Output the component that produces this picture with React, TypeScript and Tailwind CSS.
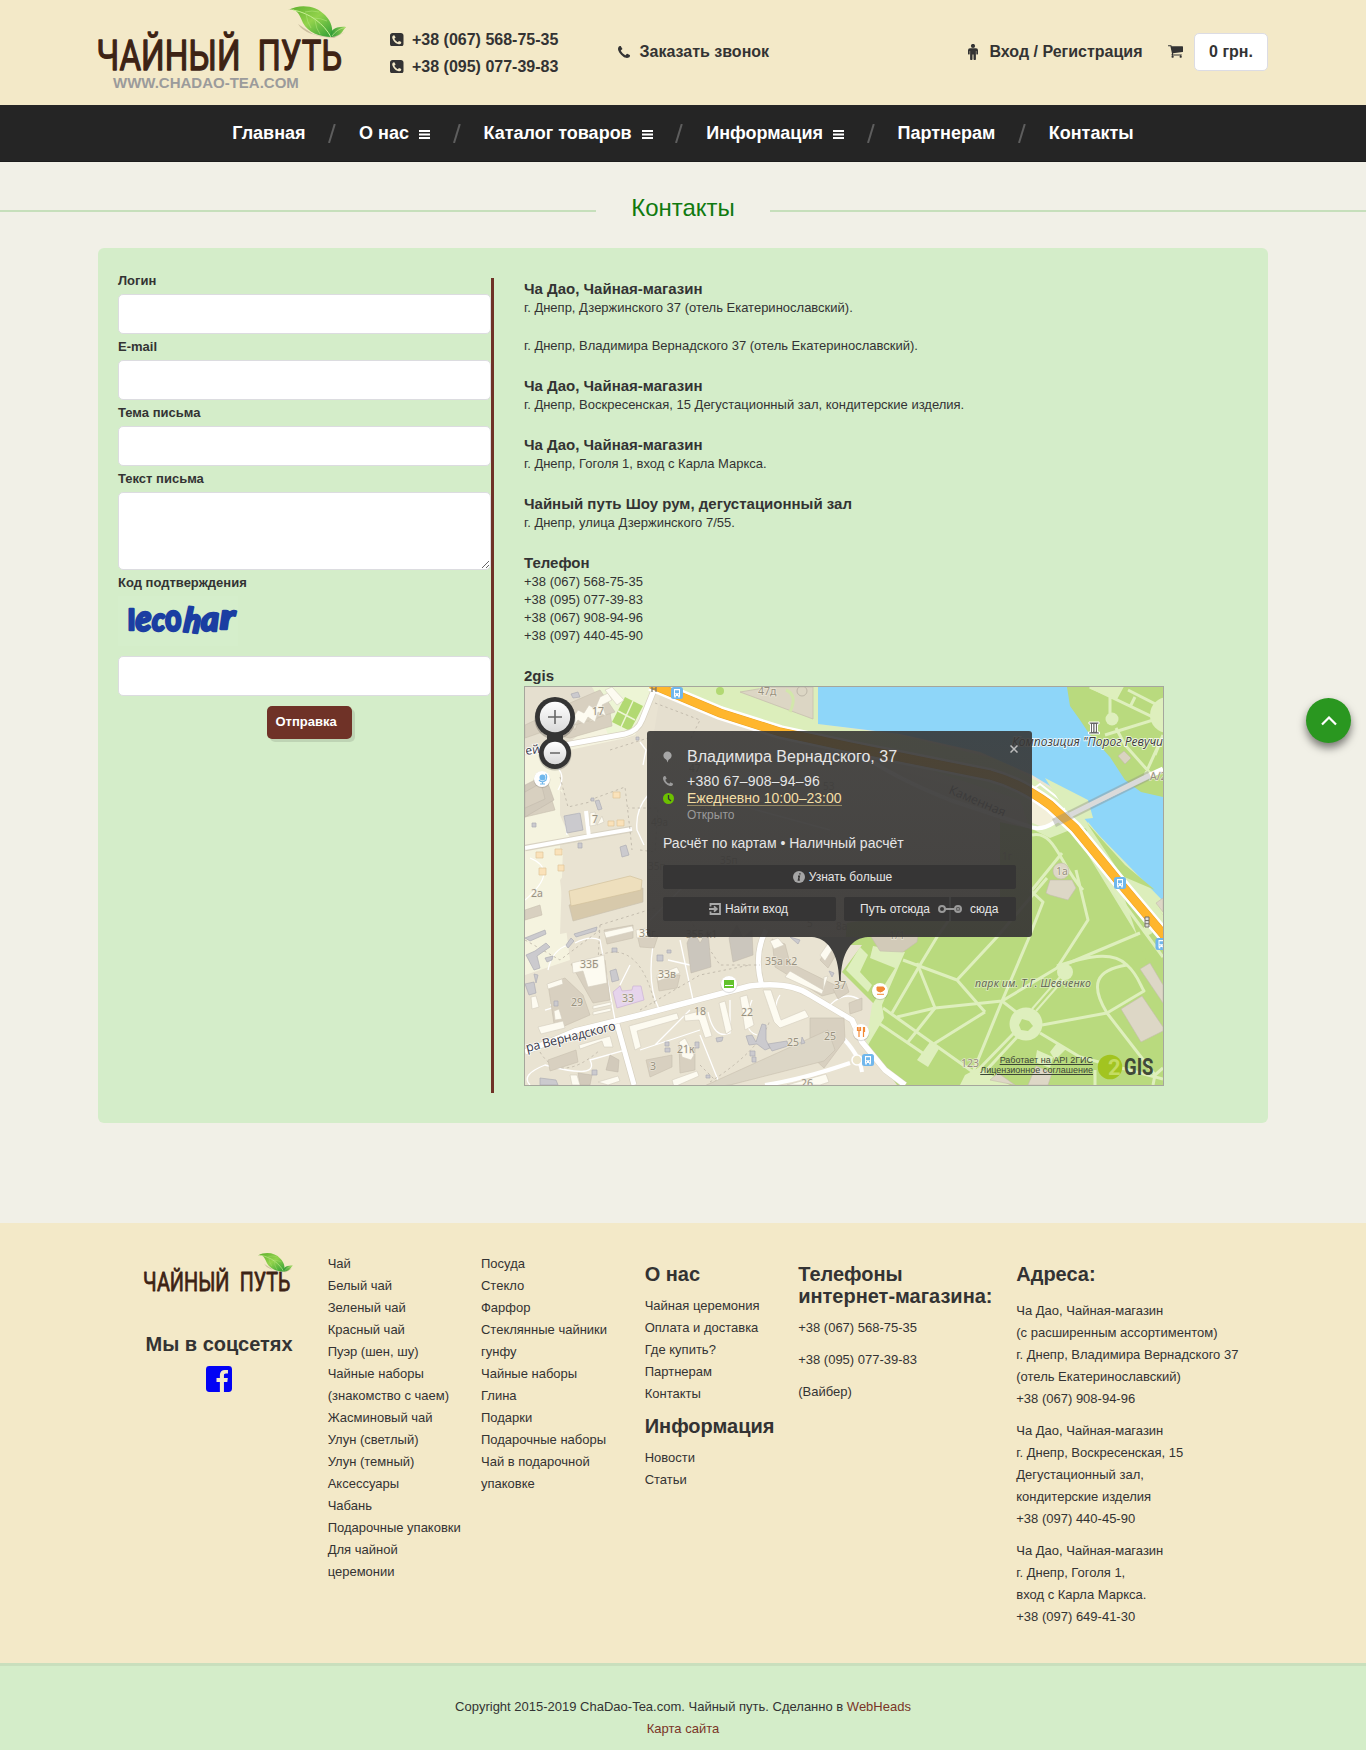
import React from "react";

const FONT = "font-['Liberation_Sans',Arial,sans-serif]";

function Logo({ className }: { className: string }) {
  return (
    <svg viewBox="0 0 250 70" className={className} aria-label="Чайный путь">
      <defs>
        <linearGradient id="leafA" x1="0" y1="0" x2="1" y2="1">
          <stop offset="0" stopColor="#5cae2c" />
          <stop offset="0.5" stopColor="#93d34c" />
          <stop offset="1" stopColor="#2f9e35" />
        </linearGradient>
        <linearGradient id="leafB" x1="0" y1="0" x2="1" y2="0">
          <stop offset="0" stopColor="#2f9a37" />
          <stop offset="1" stopColor="#9bd455" />
        </linearGradient>
      </defs>
      <g fill="#3d2314" stroke="#3d2314" strokeWidth="1.300" strokeLinejoin="round" fontFamily="Roboto, sans-serif" fontWeight="400" fontSize="42">
        <text x="-1.500" y="68.500" textLength="144" lengthAdjust="spacingAndGlyphs">ЧАЙНЫЙ</text>
        <text x="159.500" y="68.500" textLength="84.500" lengthAdjust="spacingAndGlyphs">ПУТЬ</text>
      </g>
      <g transform="translate(0 -1)">
        <path d="M200 24 Q207 36 236 38 L247 32 Q232 40 215 34Z" fill="#b9ad8c" opacity="0.7" />
        <path d="M190 10 C203 3 219 6 227 15 C234 22 235 29 234 37 C221 37 210 32 205 23 C201 14 199 8 190 10Z" fill="url(#leafA)" />
        <path d="M195 10 C212 13 226 24 233 37" fill="none" stroke="#c9ef96" strokeWidth="1" />
        <path d="M207 12 Q214 10 221 12 M215 18 Q223 18 229 21 M208 14 Q209 22 213 28 M217 20 Q218 29 222 34" fill="none" stroke="#b3e57c" strokeWidth="0.7" opacity="0.8" />
        <path d="M233 37 C231 31 237 26 248 27 C244 31 244 36 233 37Z" fill="url(#leafB)" />
        <path d="M234 36 Q239 29 247 27.500" fill="none" stroke="#cdef99" strokeWidth="0.6" />
      </g>
    </svg>
  );
}

function PhoneIcon({ className }: { className: string }) {
  return (
    <svg viewBox="192 128 1408 1408" className={className} fill="currentColor">
      <path d="M1600 1240q0 27-10 70.500t-21 68.500q-21 50-122 106-94 51-186 51-27 0-53-3.500t-57.500-12.500-47-14.500-55.500-20.500-49-18q-98-35-175-83-127-79-264-216t-216-264q-48-77-83-175-3-9-18-49t-20.500-55.500-14.500-47-12.500-57.500-3.500-53q0-92 51-186 56-101 106-122 25-11 68.500-21t70.500-10q14 0 21 3 18 6 53 76 11 19 30 54t35 63.500 31 53.500q3 4 17.500 25t21.500 35.500 7 28.500q0 20-28.500 50t-62 55-62 53-28.500 46q0 9 5 22.500t8.500 20.500 14 24 11.500 19q76 137 174 235t235 174q2 1 19 11.500t24 14 20.500 8.500 22.500 5q18 0 46-28.500t53-62 55-62 50-28.500q14 0 28.500 7t35.500 21.500 25 17.500q25 15 53.500 31t63.500 35 54 30q70 35 76 53 3 7 3 21z" />
    </svg>
  );
}

function PhoneSquareIcon() {
  return (
    <svg viewBox="128 128 1536 1536" className="h-[13.500px] w-[13.500px]" fill="currentColor">
      <path d="M1408 1193q0-11-2-16t-18-16.500-40.500-25-47.500-26.500-45.500-25-28.500-15q-5-3-19-13t-25-15-21-5q-15 0-36.500 20.500t-39.500 45-38.500 45-33.500 20.500q-7 0-16.500-3.500t-15.500-6.500-17-9.500-14-8.500q-99-55-170-126.500t-127-170.500q-2-3-8.500-14t-9.500-17-6.500-15.500-3.500-16.500q0-13 20.500-33.500t45-38.500 45-39.500 20.500-36.500q0-10-5-21t-15-25-13-19q-3-6-15-28.500t-25-45.500-26.500-47.500-25-40.500-16.500-18-16-2q-48 0-101 22-46 21-80 94.500t-34 130.500q0 16 2.500 34t5 30.500 9 33 10 29.500 12.500 33 11 30q60 164 216.500 320.500t320.500 216.500q6 2 30 11t33 12.500 29.500 10 33 9 30.500 5 34 2.500q57 0 130.500-34t94.500-80q22-53 22-101zm256-777v960q0 119-84.500 203.500t-203.500 84.500h-960q-119 0-203.500-84.500t-84.500-203.500v-960q0-119 84.500-203.500t203.500-84.500h960q119 0 203.500 84.500t84.500 203.500z" />
    </svg>
  );
}

function CartIcon() {
  return (
    <svg viewBox="64 256 1664 1408" className="h-[13px] w-[15px]" fill="currentColor">
      <path d="M704 1536q0 52-38 90t-90 38-90-38-38-90 38-90 90-38 90 38 38 90zm896 0q0 52-38 90t-90 38-90-38-38-90 38-90 90-38 90 38 38 90zm128-1088v512q0 24-16.500 42.500t-40.500 21.500l-1044 122q13 60 13 70 0 16-24 64h920q26 0 45 19t19 45-19 45-45 19h-1024q-26 0-45-19t-19-45q0-11 8-31.500t16-36 21.500-40 15.500-29.500l-177-823h-204q-26 0-45-19t-19-45 19-45 45-19h256q16 0 28.500 6.500t19.500 15.500 13 24.500 8 26 5.500 29.500 4.500 26h1201q26 0 45 19t19 45z" />
    </svg>
  );
}

function MaleIcon() {
  return (
    <svg viewBox="0 0 10 16" className="h-4 w-2.5" fill="currentColor">
      <circle cx="5" cy="2" r="2.100" />
      <path d="M2 4.300h6a2 2 0 0 1 2 2V10a.9.9 0 0 1-1.700 0V7H7.900v8a1.200 1.200 0 0 1-2.400 0V10.500h-1V15a1.200 1.200 0 0 1-2.400 0V7H1.700v3A.9.900 0 0 1 0 10V6.300a2 2 0 0 1 2-2Z" />
    </svg>
  );
}

function Header() {
  return (
    <header className="h-[105px] bg-[#f3e9c8]">
      <div className="mx-auto flex h-[105px] w-[1170px] text-[16px] font-bold leading-[27px]">
        <div className="w-[292px] pt-px">
          <Logo className="h-[70px] w-[250px] overflow-visible" />
          <div className="pl-[15px] text-[15px] leading-[24px] text-[#9b9b9b]">WWW.CHADAO-TEA.COM</div>
        </div>
        <div className="w-[228px] pt-[26px]">
          <div className="flex items-center gap-[8.500px]"><PhoneSquareIcon />+38 (067) 568-75-35</div>
          <div className="flex items-center gap-[8.500px]"><PhoneSquareIcon />+38 (095) 077-39-83</div>
        </div>
        <div className="mt-[38px] flex h-[27px] items-center gap-[9.500px]"><PhoneIcon className="h-3 w-3" />Заказать звонок</div>
        <div className="ml-auto mt-[38px] flex h-[27px] items-center">
          <MaleIcon />
          <span className="ml-3">Вход / Регистрация</span>
          <span className="ml-[25px]"><CartIcon /></span>
        </div>
        <div className="ml-[11.500px] mt-[33px] flex h-[38px] w-[74px] items-center justify-center rounded-[5px] border border-[#dcdce4] bg-white pb-px">0 грн.</div>
      </div>
    </header>
  );
}

const MENU = [
  { label: "Главная", sub: false },
  { label: "О нас", sub: true },
  { label: "Каталог товаров", sub: true },
  { label: "Информация", sub: true },
  { label: "Партнерам", sub: false },
  { label: "Контакты", sub: false },
];

function Nav() {
  return (
    <nav className="flex h-[57px] items-center justify-center border-b border-[#1c1c1c] bg-[#252525] text-[18px] font-bold text-white">
      {MENU.map((m, i) => (
        <React.Fragment key={m.label}>
          {i > 0 && (
            <span className="flex w-[53.500px] justify-center">
              <svg viewBox="0 0 8 19" className="h-[19px] w-2"><path d="M1 19 6.800 0" stroke="#5e5e5e" strokeWidth="2" /></svg>
            </span>
          )}
          <span className="flex items-center whitespace-nowrap leading-[56px]">
            {m.label}
            {m.sub && (
              <svg viewBox="0 0 11 9" className="ml-[10px] mt-[3px] h-[9px] w-[11px]" fill="#fff">
                <path d="M0 0h11v1.900H0zM0 3.550h11v1.900H0zM0 7.100h11V9H0z" />
              </svg>
            )}
          </span>
        </React.Fragment>
      ))}
    </nav>
  );
}

function Field({ label }: { label: string }) {
  return (
    <label className="block text-[13px] font-bold leading-[26px]">
      {label}
      <input className="block h-10 w-full rounded-[5px] border border-[#dcdce0] bg-white px-3 outline-none" />
    </label>
  );
}

function ContactForm() {
  return (
    <form className="w-[373px] pt-5" onSubmit={(e) => e.preventDefault()}>
      <Field label="Логин" />
      <Field label="E-mail" />
      <Field label="Тема письма" />
      <label className="block text-[13px] font-bold leading-[26px]">
        Текст письма
        <textarea className="block h-[78px] w-full resize rounded-[5px] border border-[#dcdce0] bg-white outline-none" />
      </label>
      <div className="text-[13px] font-bold leading-[26px]">Код подтверждения</div>
      <svg viewBox="0 0 120 50" className="mb-2.5 h-[50px] w-[120px] overflow-visible bg-[#d5eecb]" fill="#1b3ea2" stroke="#1b3ea2" strokeWidth="2.400" strokeLinejoin="round" fontFamily="Lato, sans-serif" fontWeight="900">
        <text x="10" y="33.500" fontSize="28" textLength="7" lengthAdjust="spacingAndGlyphs">l</text>
        <text x="17.500" y="34.500" fontSize="36" fontStyle="italic" textLength="16" lengthAdjust="spacingAndGlyphs">e</text>
        <text x="34" y="34.500" fontSize="32" fontStyle="italic" textLength="13" lengthAdjust="spacingAndGlyphs">c</text>
        <text x="47" y="34.500" fontSize="37" textLength="16.500" lengthAdjust="spacingAndGlyphs">o</text>
        <text x="65" y="35.500" fontSize="34" fontStyle="italic" transform="rotate(6 65 35)" textLength="17" lengthAdjust="spacingAndGlyphs">h</text>
        <text x="83" y="34.500" fontSize="35" fontStyle="italic" textLength="18" lengthAdjust="spacingAndGlyphs">a</text>
        <text x="102" y="33" fontSize="35" fontStyle="italic" textLength="15" lengthAdjust="spacingAndGlyphs">r</text>
      </svg>
      <input className="block h-10 w-full rounded-[5px] border border-[#dcdce0] bg-white px-3 outline-none" aria-label="Код подтверждения" />
      <button className="ml-[149px] mt-2.5 h-[33px] w-[85px] rounded-[5px] bg-[#6f3227] pb-[2px] pl-[8.500px] text-left text-[13px] font-bold text-white shadow-[3px_3px_0_rgba(0,0,0,0.1)]">
        Отправка
      </button>
    </form>
  );
}

const MAP_NUMBERS: [number, number, string][] = [
  [592, 715, "17"], [758, 695, "47д"], [592, 823, "7"], [531, 897, "2а"],
  [639, 937, "33г"], [580, 968, "33Б"], [658, 978, "33в"], [571, 1006, "29"], [622, 1002, "33"],
  [694, 1015, "18"], [741, 1016, "22"], [765, 965, "35а к2"], [834, 989, "37"], [787, 1046, "25"],
  [824, 1040, "25"], [677, 1053, "21к"], [650, 1070, "3"], [801, 1087, "26"], [961, 1067, "123"],
  [1056, 875, "1а"], [889, 939, "1/1"], [1150, 780, "А/2"],
];

const MAP_POPUP_NUMBERS: [number, number, string][] = [
  [689, 772, "47"], [823, 790, "53"], [700, 812, "49"], [651, 826, "49а"], [648, 870, "35п"], [720, 864, "35п"],
  [686, 938, "35Б к1"], [807, 927, "5"], [836, 930, "8а"], [1002, 860, "1г"],
];

function MapStop({ x, y }: { x: number; y: number }) {
  return (
    <g transform={`translate(${x} ${y})`}>
      <rect x="-6" y="-6" width="12" height="12" rx="2.500" fill="#70b7ec" />
      <path d="M-3 -4h6v7h-6zM-2.800 3h1.600v1.600h-1.600zM1.200 3h1.600v1.600h-1.600z" fill="#fff" />
      <path d="M-2 -2.800h4v3h-4zM-2 1.200h1v1h-1zM1 1.200h1v1h-1z" fill="#70b7ec" />
    </g>
  );
}

function CityMap() {
  return (
    <svg viewBox="525 687 638 398" className="block h-[398px] w-[638px]">
      <rect x="525" y="687" width="638" height="398" fill="#e9e3d2" />
      <g fill="#f5f3df">
        <path d="M525 687H655L640 735 560 752 563 800 590 845 560 880 570 960 525 975Z" />
        <path d="M640 775 560 790 572 806 628 800 632 830 575 850 560 850 560 760Z" fill="#e9e3d2" />
        <path d="M560 760 635 735 650 700 700 720 700 880 635 920 560 934 563 848 632 835 630 805 575 808Z" fill="#e9e3d2" />
        <path d="M525 820 560 815 570 838 525 848Z" />
        <path d="M590 687h65l-20 46-25 7z" fill="#edf5d5" />
      </g>
      <path d="M525 687H592L606 712 570 742 525 750Z" fill="#e5dfcf" />
      {/* river and embankment */}
      <path d="M655 687H820V724L900 735 1000 760 1062 795 1103 838 1163 900V1000L1040 860 1020 800 900 760 760 725Z" fill="#dceebb" />
      <path d="M818 687H1163V901L1092 828 1065 795 1032 775 980 752 900 734 818 724Z" fill="#8ed6f9" />
      <path d="M1067 687H1163V797L1141 792 1125 780 1110 757 1090 735 1080 720 1070 706Z" fill="#b9da7e" />
      <g fill="none" stroke="#deefbd" strokeWidth="3">
        <path d="M1090 687 1163 722M1110 692V718M1105 735 1163 717M1116 728 1125 745 1150 773M1128 690 1163 708M1135 697 1130 707M1163 735 1145 775M1155 755 1163 735" />
        <path d="M1090 687H1122L1116 698Z" fill="#deefbd" />
      </g>
      <circle cx="1112" cy="719" r="6.500" fill="#deefbd" />
      <circle cx="1168" cy="715" r="18" fill="#deefbd" />
      <path d="M1118 756 1124 751 1131 758 1125 764Z" fill="#d9d3c1" stroke="#c2bba8" strokeWidth="0.6" />
      {/* park */}
      <path d="M845 945 852 860 900 800 1032 829 1050 838 1070 830 1085 828 1163 915V1085H897L868 1045 880 1010 842 972 862 945Z" fill="#b9da7e" />
      <path d="M1032 788 1048 800 1065 818 1045 828 1030 822Z" fill="#f3efd9" />
      <path d="M1032 790 1040 784 1067 805 1062 812" fill="none" stroke="#fff" strokeWidth="2" />
      <path d="M1045 778 1088 800 1093 818 1075 820 1062 805Z" fill="#dceebb" />
      <path d="M1088 822 1140 885 1163 915V1000L1140 940 1085 850Z" fill="#dceebb" />
      <path d="M1087 823 1125 865 1155 890 1122 876Z" fill="#b9da7e" />
      <path d="M1112 880 1163 944V1010L1125 900Z" fill="#b9da7e" />
      <g fill="none" stroke="#deefbd" strokeWidth="3" strokeLinejoin="round">
        <path d="M903 960 957 980 985 1012" />
        <path d="M897 1017 935 1008 1002 1001 1057 968 1140 933" />
        <path d="M1057 966C1085 957 1112 950 1127 965 1138 975 1140 985 1144 991L1107 1013 1042 1025" />
        <path d="M1127 965C1095 970 1090 985 1107 1013L1155 1075" />
        <path d="M917 963 935 1008 908 1042M957 980 997 937 1047 878" />
        <path d="M892 1013 920 965 937 937 970 890" />
        <path d="M1002 1001 1028 940 1043 902 1030 890M1002 1001 973 1072 962 1085" />
        <path d="M1002 1001 1020 1015M932 1045 985 1012" />
        <path d="M877 1022 930 1058M883 1008 973 1072 992 1085" />
        <path d="M1040 1033 1080 1057 1163 1079M1014 1033 978 1070M1018 1036 982 1075" />
        <path d="M1076 870 1088 920 1057 968M1032 835C1055 830 1060 865 1083 890M1062 853 1032 890" />
        <path d="M1032 1009 1060 977M1036 1011 1064 979" strokeWidth="2" />
        <path d="M1108 882 1163 957M1155 1075 1163 1068M1155 1075 1153 1085M1095 1085V1070" />
      </g>
      <g fill="#deefbd">
        <circle cx="1026" cy="1024" r="16.500" />
        <circle cx="1065" cy="972" r="8" />
        <path d="M905 952 882 1005 884 1018 865 1050 872 1005 895 968 870 958 873 946Z" />
        <path d="M846 970 860 947 868 955 860 972 872 985 868 992Z" />
        <path d="M930 1042 940 1047 928 1067 917 1060Z" />
        <path d="M965 1075 978 1068 1010 1085H960ZM1057 1043 1066 1049 1055 1060 1050 1052ZM1037 1050 1053 1057 1050 1068 1035 1062Z" />
        <circle cx="1148" cy="930" r="5" />
      </g>
      <path d="M1019 1025 1022 1019 1029 1021 1033 1026 1028 1031 1021 1030Z" fill="#b9da7e" />
      <g fill="#ddd7c6" stroke="#c5beac" strokeWidth="0.6">
        <path d="M1121 1009 1142 996 1163 1027 1163 1031 1141 1042Z" />
        <path d="M1140 969 1150 963 1163 985V1003Z" />
        <path d="M1050 880 1072 880 1076 888 1068 900 1050 895 1046 893Z" />
        <circle cx="1061" cy="871" r="8" />
        <path d="M870 935H918L917 942 903 952 880 951Z" fill="#d2cab8" />
        <path d="M1028 1085 1036 1066 1052 1073 1048 1085ZM990 1080 998 1073 1015 1085ZM1156 903 1163 898V912Z" />
      </g>
      {/* north-west lawn and quarter */}
      <path d="M612 722 625 697 643 706 630 731Z" fill="#b2d972" />
      <path d="M618 711 635 720M633 701 621 727" stroke="#edf5d5" strokeWidth="1.500" />
      <path d="M740 692 813 719V687H770Z" fill="#dcd6c4" stroke="#c6bfae" strokeWidth="0.8" />
      <circle cx="720" cy="691" r="4" fill="#b2d972" />
      <circle cx="802" cy="691" r="5" fill="none" stroke="#beb7a8" />
      <path d="M786 690Q798 695 790 712" fill="none" stroke="#d2e7ab" strokeWidth="3" />
      <path d="M660 695 780 735 1000 800V900L800 930 760 930 650 930 648 770Z" fill="#e5dfcf" />
      {/* white streets */}
      <g fill="none" stroke="#d8d2c2" strokeWidth="6.500" strokeLinejoin="round">
        <path d="M525 752 570 744 625 734Q638 731 642 720L654 690" />
        <path d="M525 848 632 829M525 1052 575 1031 640 1015 750 986Q790 981 810 995L852 1020 862 1042 885 1070 905 1085M617 1024 634 1085M762 986Q753 955 766 930" />
      </g>
      <g fill="none" stroke="#fff" strokeWidth="5" strokeLinejoin="round">
        <path d="M525 752 570 744 625 734Q638 731 642 720L654 690" />
        <path d="M525 848 585 837 632 829M586 811 589 837" strokeWidth="4" />
        <path d="M525 1052 575 1031 640 1015 750 986Q790 981 810 995L852 1020 862 1042 885 1070 905 1085" strokeWidth="5.500" />
        <path d="M617 1024 634 1085M762 986Q753 955 766 930" />
        <path d="M850 1063Q800 1080 765 1085M840 1035Q860 1055 862 1072" strokeWidth="4" />
        <path d="M1163 770 1055 822Q1040 832 1028 826L950 800Q900 780 870 760" strokeWidth="4" />
      </g>
      <circle cx="857" cy="1060" r="5" fill="#ece5cb" stroke="#fff" strokeWidth="1.500" />
      <g fill="none" stroke="#fff" strokeWidth="1.300">
        <path d="M567 835 565 818 580 813M648 795Q635 810 637 830L644 845M575 943Q590 935 600 940L615 1020M548 970Q552 950 568 945M653 945Q647 985 659 1009M680 940 693 1000M708 1012Q714 1040 730 1033V1000M752 1000Q740 1030 757 1035M780 995Q770 1010 785 1025M640 1050 700 1030M530 1085Q520 1075 545 1065 600 1080 590 1060L625 1050M700 1035 720 1085M668 960 690 965M630 965 620 985M545 1010Q580 1000 550 1005M525 900Q560 870 530 858M558 790Q570 770 545 760M690 1010 655 1045" />
        <path d="M640 742 646 750 643 765M830 1005Q845 990 860 1000M720 800 830 830M650 920 700 870" />
      </g>
      <g fill="none" stroke="#bab3a4" strokeWidth="0.8" strokeDasharray="2.500 3">
        <path d="M560 777 568 807 590 802M590 800 625 787 630 830 632 850M610 750 648 738M655 703 700 720 690 740M640 850 655 852 658 808 628 808M600 925 655 908M600 925 597 980M600 955Q640 940 655 1005M690 920 720 965 760 965M640 1010 700 975 750 965M700 1065 720 1085M710 1082Q760 1050 770 1020M540 1052Q560 1085 600 1050M525 940 560 960 600 930" />
      </g>
      {/* buildings with their shaded sides */}
      <g fill="#d8d0c0" stroke="#c7bfaf" strokeWidth="0.6">
        <path d="M555 735 566 716 575 730 580 717 590 722 610 712 612 726 570 738ZM525 725 540 718 548 730 525 738Z" />
        <path d="M570 703 600 690 615 712 575 725ZM525 790 545 778 555 810 525 817Z" />
        <path d="M569 905 643 888V902L573 921Z" fill="#d7c9ab" />
        <path d="M604 930 633 925V938L607 944ZM637 934 658 936 654 948 640 947Z" />
        <path d="M571 964 605 960 610 1000 593 1003ZM548 984 565 978 583 995 590 1015 555 1030Z" />
        <path d="M657 977 680 975 677 988 659 991ZM548 1060 576 1050 578 1062 550 1071ZM646 1060 672 1055 672 1067 650 1077Z" />
        <path d="M772 939 785 944 790 963 845 990 822 996 775 967ZM820 960 832 942 840 948 828 968Z" />
        <path d="M679 1045 695 1048V1070L680 1073ZM810 1018 844 1018 845 1040 824 1068 810 1055Z" />
        <path d="M700 1088 828 1030 835 1050 824 1061 730 1085Z" fill="#dcd6c6" />
        <path d="M833 989 846 983 849 992 838 999ZM849 1003 862 998 862 1010 850 1014ZM525 910 540 905 542 915 525 920Z" />
      </g>
      <g fill="#d2cabb" stroke="#bfb7a8" strokeWidth="0.5">
        <path d="M687 943 693 930 700 943 708 930 711 967 691 973Z" fill="#cbc6bd" />
        <path d="M729 938 737 925 743 938 752 930 753 955 733 962Z" fill="#cbc6bd" />
        <path d="M525 785 545 775 554 800 525 817V808L545 799 541 783 525 792Z" />
        <path d="M610 1055 619 1060 618 1072 606 1070ZM578 1073 592 1075 590 1085H580Z" />
      </g>
      <g fill="#fdfbf1" stroke="#d3ccbd" strokeWidth="0.6">
        <path d="M557 728 560 719 565 722 568 715 573 718 578 710 584 713 589 705 595 709 600 697 608 693 612 700 602 705 606 716 598 712 595 722 588 717 584 724 578 720 573 727 568 723 563 731Z" />
        <path d="M605 690 612 687 624 700 617 705Z" />
        <path d="M590 813 595 812 596 825 590 826ZM602 816 604 822 597 825Z" />
        <path d="M604 932 632 926 634 931 606 938ZM636 930 647 928 650 936 637 938Z" />
        <path d="M572 963 604 955 607 983 588 987 583 971 573 973ZM593 1006 611 1002V1005L593 1009ZM593 1012 611 1008V1011L593 1015Z" />
        <path d="M547 984 562 979 563 984 548 989ZM538 1027 563 1021 565 1028 541 1034ZM554 1011 559 1009 562 1019 555 1020Z" />
        <path d="M657 975 677 967 680 973 658 981Z" />
        <path d="M629 1026 677 1013 679 1019 637 1031 641 1047 635 1050Z" />
        <path d="M684 1015 704 1010 712 1036 705 1038 699 1020 685 1021ZM719 1003 725 1001 732 1030 726 1034ZM740 997 747 995 754 1025 745 1030ZM763 990 771 990 781 1020 805 1010 809 1017 780 1028 774 1022Z" />
        <path d="M785 977 790 971 823 990 824 977 828 976 822 994Z" />
        <path d="M579 1045 610 1036 613 1047 604 1047 602 1041 580 1049ZM679 1042 685 1038 694 1055 691 1060 682 1057ZM672 1080 697 1071 699 1076 674 1087ZM770 941 778 938 784 945 774 949ZM820 955 829 942 832 950 825 961ZM598 1082 618 1076 620 1081 608 1085ZM570 1075H577L580 1085H572ZM531 997 536 996 539 1007 532 1009ZM787 1085 826 1074 829 1082 820 1085Z" />
      </g>
      <path d="M569 891 630 876 642 880 641 890 571 906Z" fill="#eedfbd" stroke="#d3c19c" strokeWidth="0.7" />
      <path d="M613 992 620 986 622 991 632 990 633 986 641 986 644 1000 617 1008Z" fill="#e6d4ec" stroke="#cbb2d5" strokeWidth="0.7" />
      <g fill="#cbcace" stroke="#aeaeb4" strokeWidth="0.7">
        <path d="M564 816 580 813 583 830 567 833ZM620 847 626 845 629 855 622 857ZM571 694 578 692 580 697 573 698ZM595 801 599 800 602 809 598 810ZM591 798h3v3h-3zM578 843h4v5h-4zM532 823h4v4h-4zM636 737h3v3h-3z" />
        <path d="M525 938 545 930 546 934 530 941ZM535 951 546 943 550 947 537 956 540 968 534 970 526 955ZM566 945 571 938 574 941 568 948ZM574 934 597 927 596 931 576 937ZM612 948h5v4h-5zM545 958 553 956 552 960 547 962ZM610 971 616 969 619 980 612 982ZM657 955h6v6h-6zM667 950h4v3h-4zM534 974 538 975 536 983ZM525 984 534 982 536 993 529 995ZM554 1001h4v5h-4z" />
        <path d="M746 1036 752 1035 756 1042 762 1024 766 1025V1040L770 1048 765 1050 757 1044 749 1045ZM768 1044 787 1041 788 1046 772 1051ZM695 1042h4v6h-4zM665 1042h4v4h-4zM665 1048h5v4h-5zM750 1051h5v5h-5zM752 1057h4v5h-4zM716 1038 723 1037 722 1041 717 1042ZM802 1037 805 1043 801 1044ZM592 1070h5v5h-5zM540 1078 556 1080 558 1085H540ZM706 1075h4v3h-4zM790 937 800 940 798 944ZM829 971 834 973 832 977Z" />
      </g>
      <g fill="#fae2ba" stroke="#dfc49a" strokeWidth="0.7">
        <path d="M613 792h7v6h-7zM608 821h6v5h-6zM617 820h7v6h-7zM536 852h7v6h-7zM555 849h7v6h-7zM558 865h6v6h-6zM539 868h7v7h-7z" />
      </g>
      {/* avenue and bridge */}
      <path d="M651 684 720 713 780 732 850 747 990 775Q1020 783 1050 805L1075 828 1120 883 1168 940" fill="none" stroke="#fff" strokeWidth="14" />
      <path d="M651 684 720 713 780 732 850 747 990 775Q1020 783 1050 805L1075 828 1120 883 1168 940" fill="none" stroke="#eaa325" strokeWidth="9" />
      <path d="M651 684 720 713 780 732 850 747 990 775Q1020 783 1050 805L1075 828 1120 883 1168 940" fill="none" stroke="#ffb62d" strokeWidth="8" />
      <path d="M1054 823 1150 775" stroke="#8c8c86" strokeOpacity="0.4" strokeWidth="9" />
      <path d="M1070 815 1150 775" stroke="#dadada" strokeWidth="5" />
      <path d="M1150 775 1163 769" stroke="#fff" strokeWidth="5" />
      <path d="M652 686v6M656 686v6M652 689h4" stroke="#77736a" strokeWidth="1.200" />
      <g fontFamily="'Noto Sans', 'Open Sans', sans-serif" fontSize="10.500" fill="#98917f" stroke="#f1ece0" strokeWidth="1.500" strokeOpacity="0.7" paintOrder="stroke">
        {MAP_NUMBERS.map(([x, y, t]) => <text key={`${x}-${y}`} x={x} y={y}>{t}</text>)}
      </g>
      <g fontFamily="'Noto Sans', 'Open Sans', sans-serif" fontSize="10" fill="#98917f">
        {MAP_POPUP_NUMBERS.map(([x, y, t]) => <text key={`${x}-${y}`} x={x} y={y}>{t}</text>)}
      </g>
      <g fontFamily="'Open Sans', 'Noto Sans', sans-serif" stroke="#fff" strokeWidth="1.800" strokeOpacity="0.75" paintOrder="stroke" fill="#39394a">
        <text x="526" y="755" fontSize="12" transform="rotate(-9 526 755)">ей</text>
        <text x="527" y="1052" fontSize="12.500" textLength="92" transform="rotate(-14 527 1052)">ра Вернадского</text>
        <text x="948" y="793" fontSize="12.500" transform="rotate(23 948 793)" strokeOpacity="0">Каменная</text>
        <text x="1012" y="746" fontSize="12" fontStyle="italic" fill="#3c3c3c" textLength="151" lengthAdjust="spacingAndGlyphs">Композиция "Порог Ревучи</text>
        <text x="975" y="987" fontSize="10.500" fontStyle="italic" fill="#5f6253" textLength="116" strokeOpacity="0.4">парк им. Т.Г. Шевченко</text>
      </g>
      <path d="M1089 722h10v2h-1.500v8h2v2h-11v-2h2v-8h-1.500zM1092.500 724v8M1095 724v8" fill="#666" stroke="#fff" strokeWidth="1" />
      <path d="M1092.800 724v7.500M1095.500 724v7.500" stroke="#fff" strokeWidth="0.8" />
      <MapStop x={677} y={693} />
      <MapStop x={1120} y={883} />
      <MapStop x={868} y={1060} />
      <MapStop x={1161.500} y={944} />
      <path d="M1145 917h4v10h-4z" fill="#ddd" stroke="#77736a" />
      <path d="M1145 920.500h4M1145 923.700h4" stroke="#77736a" />
      {[[542, 779], [729, 984], [880, 991], [861, 1032]].map(([x, y]) => (
        <g key={x}><circle cx={x} cy={y + 0.700} r="8.500" fill="#000" opacity="0.12" /><circle cx={x} cy={y} r="8" fill="#fff" /></g>
      ))}
      <circle cx="542.500" cy="777.500" r="3" fill="#70b7ec" />
      <path d="M539 780Q542 783.500 546 780 547.500 776 545.500 774M542.500 782v2M540 784h5" fill="none" stroke="#70b7ec" strokeWidth="1.200" />
      <path d="M724 980h10v8h-10z" fill="#63c32c" />
      <path d="M725 985.500h8" stroke="#fff" />
      <path d="M877 987h6.500v3.500q-3.200 3-6.500 0zM883 988h1.500v1.700H883M877 994.300h7" fill="#f28a36" stroke="#f28a36" />
      <path d="M859 1027v10M857.500 1027v3.500h3V1027M863.500 1027v10M864.500 1027v5" fill="none" stroke="#f28a36" strokeWidth="1.200" />
      {/* provider mark */}
      <circle cx="1110" cy="1067" r="12.300" fill="#a2c420" />
      <text x="1108" y="1074.500" fontFamily="Roboto, sans-serif" fontWeight="700" fontSize="22" fill="#c4dc62">2</text>
      <text x="1124" y="1075" fontFamily="Roboto, sans-serif" fontWeight="700" fontSize="23" fill="#404a38" textLength="29.500" lengthAdjust="spacingAndGlyphs">GIS</text>
    </svg>
  );
}

function MapPopup() {
  return (
    <div className="absolute left-[122px] top-[44px] h-[206px] w-[385px] rounded-[3px] bg-[linear-gradient(180deg,rgba(52,51,50,0.88),rgba(60,59,58,0.93)_30%,rgba(56,54,53,0.93))] px-4 text-[#e6e6e6]">
      <div className="flex h-6 items-center pt-[26px]">
        <span className="w-6">
          <svg viewBox="0 0 10 12" className="h-3 w-[9px]" fill="#a6a6a6"><path d="M5 0a4.600 4.600 0 0 1 4.600 4.600C9.600 7 7 8.700 6 9.200L5 12 4 9.200C3 8.700.4 7 .4 4.600A4.600 4.600 0 0 1 5 0Z" /></svg>
        </span>
        <span className="text-[16px]">Владимира Вернадского, 37</span>
      </div>
      <svg viewBox="0 0 8 8" className="absolute right-3.5 top-3.5 h-2 w-2"><path d="m.5.5 7 7M7.500.5l-7 7" stroke="#bdbdbd" strokeWidth="1.500" /></svg>
      <div className="mt-[15px] flex h-[17px] items-center text-[14px]">
        <span className="w-6 text-[#9b9b9b]"><PhoneIcon className="h-2.5 w-2.5" /></span>
        <span className="tracking-[0.24px]">+380 67‒908‒94‒96</span>
      </div>
      <div className="mt-px flex h-[17px] items-center text-[14px]">
        <span className="w-6"><svg viewBox="0 0 11 11" className="h-[11px] w-[11px]"><circle cx="5.500" cy="5.500" r="5.500" fill="#6cc000" /><path d="M5.500 2v3.800L8 8" fill="none" stroke="#333" strokeWidth="1.300" /></svg></span>
        <span className="border-b border-[#948764] leading-[14px] text-[#f4dfa6]">Ежедневно 10:00–23:00</span>
      </div>
      <div className="pl-6 text-[12px] leading-[17px] text-[#9a9a9a]">Открыто</div>
      <div className="mt-[9px] text-[14px] leading-5">Расчёт по картам • Наличный расчёт</div>
      <div className="mt-3 flex h-6 items-center justify-center gap-1 rounded-[2px] bg-[#363535] pl-[6px] text-[12px]">
        <svg viewBox="0 0 12 12" className="h-3 w-3"><circle cx="6" cy="6" r="6" fill="#a5a5a5" /><path d="M6.900 2.200v1.300M5 5.200h1.300L5.500 9h1.300" fill="none" stroke="#363535" strokeWidth="1.500" /></svg>
        Узнать больше
      </div>
      <div className="mt-2 flex gap-2 text-[12px]">
        <div className="flex h-6 w-[173px] items-center justify-center gap-1 rounded-[2px] bg-[#363535] pr-[2px]">
          <svg viewBox="0 0 12 12" className="h-3 w-3" fill="none" stroke="#a9a9a9" strokeWidth="1.800"><path d="M1.500 3.500V1h9.500v10H1.500V8.500M0 6h7.500M5 3.300 7.800 6 5 8.700" /></svg>
          Найти вход
        </div>
        <div className="flex h-6 w-[172px] items-center rounded-[2px] bg-[#363535] pl-4">
          Путь отсюда
          <svg viewBox="0 0 24 24" className="ml-2 h-6 w-6" fill="none" stroke="#9a9a9a" strokeWidth="2"><path d="M12 0v24" stroke="#444" strokeWidth="1.500" /><circle cx="4" cy="12" r="3" /><path d="M7 12h10" /><circle cx="20" cy="12" r="3" /><circle cx="20" cy="12" r="0.500" /></svg>
          <span className="ml-2">сюда</span>
        </div>
      </div>
      <svg viewBox="0 0 56 44" className="absolute left-[165px] top-[206px] h-11 w-14"><path d="M0 0H56C40 1 29 14 28.800 44H27.200C27 14 14 1 0 0Z" fill="#403f3e" /></svg>
    </div>
  );
}

function MapBox() {
  return (
    <div className="relative h-[400px] w-[640px] overflow-hidden border border-[#a5a69c]">
      <CityMap />
      <MapPopup />
      <svg viewBox="0 0 46 84" className="absolute left-[7px] top-[7px] h-[84px] w-[46px]">
        <defs>
          <linearGradient id="knob" x1="0" y1="0" x2="0" y2="1"><stop offset="0" stopColor="#fff" /><stop offset="1" stopColor="#d9d9d9" /></linearGradient>
        </defs>
        <g fill="#000" opacity="0.2"><circle cx="23" cy="25" r="20.500" /><circle cx="23" cy="60" r="16.500" /></g>
        <g fill="#353535"><circle cx="23" cy="23" r="20" /><circle cx="23" cy="59" r="16" /><path d="M15 38h16v8H15z" /></g>
        <circle cx="23" cy="23" r="15.200" fill="url(#knob)" />
        <circle cx="23" cy="59" r="11.300" fill="url(#knob)" />
        <path d="M16 23h14M23 16v14M18 59h10" stroke="#666" strokeWidth="1.600" />
      </svg>
      <div className="absolute bottom-[10px] right-[70px] text-right text-[9px] leading-[10px] text-[#3d4636]">
        <div className="underline">Работает на API 2ГИС</div>
        <div className="underline">Лицензионное соглашение</div>
      </div>
    </div>
  );
}

function Heading({ children }: { children: string }) {
  return <h3 className="mt-[22px] pb-px text-[15px] font-bold leading-[18px]">{children}</h3>;
}

function Contacts() {
  return (
    <div className="pl-[30px] pt-[10px] text-[13px] leading-[18px]">
      <Heading>Ча Дао, Чайная-магазин</Heading>
      <p>г. Днепр, Дзержинского 37 (отель Екатеринославский).</p>
      <p className="mt-5">г. Днепр, Владимира Вернадского 37 (отель Екатеринославский).</p>
      <Heading>Ча Дао, Чайная-магазин</Heading>
      <p>г. Днепр, Воскресенская, 15 Дегустационный зал, кондитерские изделия.</p>
      <Heading>Ча Дао, Чайная-магазин</Heading>
      <p>г. Днепр, Гоголя 1, вход с Карла Маркса.</p>
      <Heading>Чайный путь Шоу рум, дегустационный зал</Heading>
      <p>г. Днепр, улица Дзержинского 7/55.</p>
      <Heading>Телефон</Heading>
      <p>+38 (067) 568-75-35</p>
      <p>+38 (095) 077-39-83</p>
      <p>+38 (067) 908-94-96</p>
      <p>+38 (097) 440-45-90</p>
      <Heading>2gis</Heading>
      <MapBox />
    </div>
  );
}

const CATALOG_TEA = ["Чай", "Белый чай", "Зеленый чай", "Красный чай", "Пуэр (шен, шу)", "Чайные наборы (знакомство с чаем)", "Жасминовый чай", "Улун (светлый)", "Улун (темный)", "Аксессуары", "Чабань", "Подарочные упаковки", "Для чайной церемонии"];
const CATALOG_WARE = ["Посуда", "Стекло", "Фарфор", "Стеклянные чайники гунфу", "Чайные наборы", "Глина", "Подарки", "Подарочные наборы", "Чай в подарочной упаковке"];
const ABOUT = ["Чайная церемония", "Оплата и доставка", "Где купить?", "Партнерам", "Контакты"];
const ADDRESSES = [
  ["Ча Дао, Чайная-магазин", "(с расширенным ассортиментом)", "г. Днепр, Владимира Вернадского 37", "(отель Екатеринославский)", "+38 (067) 908-94-96"],
  ["Ча Дао, Чайная-магазин", "г. Днепр, Воскресенская, 15", "Дегустационный зал,", "кондитерские изделия", "+38 (097) 440-45-90"],
  ["Ча Дао, Чайная-магазин", "г. Днепр, Гоголя 1,", "вход с Карла Маркса.", "+38 (097) 649-41-30"],
];

function Links({ items }: { items: string[] }) {
  return <ul>{items.map((t) => <li key={t}>{t}</li>)}</ul>;
}

function Footer() {
  return (
    <footer>
      <div className="h-[440px] bg-[#f3e9c8]">
        <div className="mx-auto flex w-[1170px] pt-[30px] text-[13px] leading-[22px]">
          <div className="flex w-[229.700px] flex-col items-center pl-[12.500px]">
            <Logo className="-mt-[3px] h-[42px] w-[150px] overflow-visible" />
            <div className="mt-[41px] text-[20px] font-bold leading-[22px]">Мы в соцсетях</div>
            <svg viewBox="128 128 1536 1536" className="mt-[11px] h-[26px] w-[26px]" fill="#0202f5">
              <path d="M1464 128q200 0 200 200v1136q0 200-200 200h-276v-595h199l30-232h-229v-148q0-56 23.500-84t91.500-28l122-1v-207q-63-9-178-9-136 0-217.500 80t-81.500 226v171h-200v232h200v595h-620q-200 0-200-200v-1136q0-200 200-200h1136z" />
            </svg>
          </div>
          <div className="w-[153.300px] pr-4"><Links items={CATALOG_TEA} /></div>
          <div className="w-[163.700px] pr-8"><Links items={CATALOG_WARE} /></div>
          <div className="w-[153.500px] pt-2.5">
            <h4 className="mb-2.5 text-[20px] font-bold leading-[22px]">О нас</h4>
            <Links items={ABOUT} />
            <h4 className="my-2.5 text-[20px] font-bold leading-[22px]">Информация</h4>
            <Links items={["Новости", "Статьи"]} />
          </div>
          <div className="w-[218.100px] pt-2.5">
            <h4 className="mb-2.5 text-[20px] font-bold leading-[22px]">Телефоны<br />интернет-магазина:</h4>
            <p className="mb-2.5">+38 (067) 568-75-35</p>
            <p className="mb-2.5">+38 (095) 077-39-83</p>
            <p>(Вайбер)</p>
          </div>
          <div className="pt-2.5">
            <h4 className="mb-[15px] text-[20px] font-bold leading-[22px]">Адреса:</h4>
            {ADDRESSES.map((a, i) => (
              <div key={i} className="mb-2.5 whitespace-nowrap">{a.map((l) => <div key={l}>{l}</div>)}</div>
            ))}
          </div>
        </div>
      </div>
      <div className="h-[87px] border-t-[3px] border-[#c9dfbd] bg-[#d4edc9] pt-[30px] text-center text-[13px] leading-[22px]">
        <div>Copyright 2015-2019 ChaDao-Tea.com. Чайный путь. Сделанно в <a className="text-[#7a3527]">WebHeads</a></div>
        <div><a className="text-[#7a3527]">Карта сайта</a></div>
      </div>
    </footer>
  );
}

export default function App() {
  return (
    <div className={`relative h-[1750px] w-[1366px] overflow-hidden bg-[#f1f0e7] text-[#333] ${FONT}`}>
      <Header />
      <Nav />
      <div className="flex h-[86px] items-center">
        <div className="mt-[12px] h-[2px] flex-1 bg-[#c6dfbb]" />
        <h1 className="mt-[5px] w-[174px] text-center text-[24px] text-[#107a10]">Контакты</h1>
        <div className="mt-[12px] h-[2px] flex-1 bg-[#c6dfbb]" />
      </div>
      <main className="mx-auto flex h-[875px] w-[1170px] rounded-[6px] bg-[#d4edc9] pl-5">
        <ContactForm />
        <div className="mt-[30px] h-[815px] w-[3px] bg-[#6f3227]" />
        <Contacts />
      </main>
      <div className="h-[100px]" />
      <Footer />
      <button className="absolute left-[1306px] top-[698px] flex h-[45px] w-[45px] items-center justify-center rounded-full bg-[#2a9720] shadow-[0_5px_8px_rgba(0,0,0,0.5)]" aria-label="Наверх">
        <svg viewBox="0 0 16 10" className="h-2.5 w-4"><path d="m1 8.500 7-7 7 7" fill="none" stroke="#fff" strokeWidth="2.200" /></svg>
      </button>
    </div>
  );
}
